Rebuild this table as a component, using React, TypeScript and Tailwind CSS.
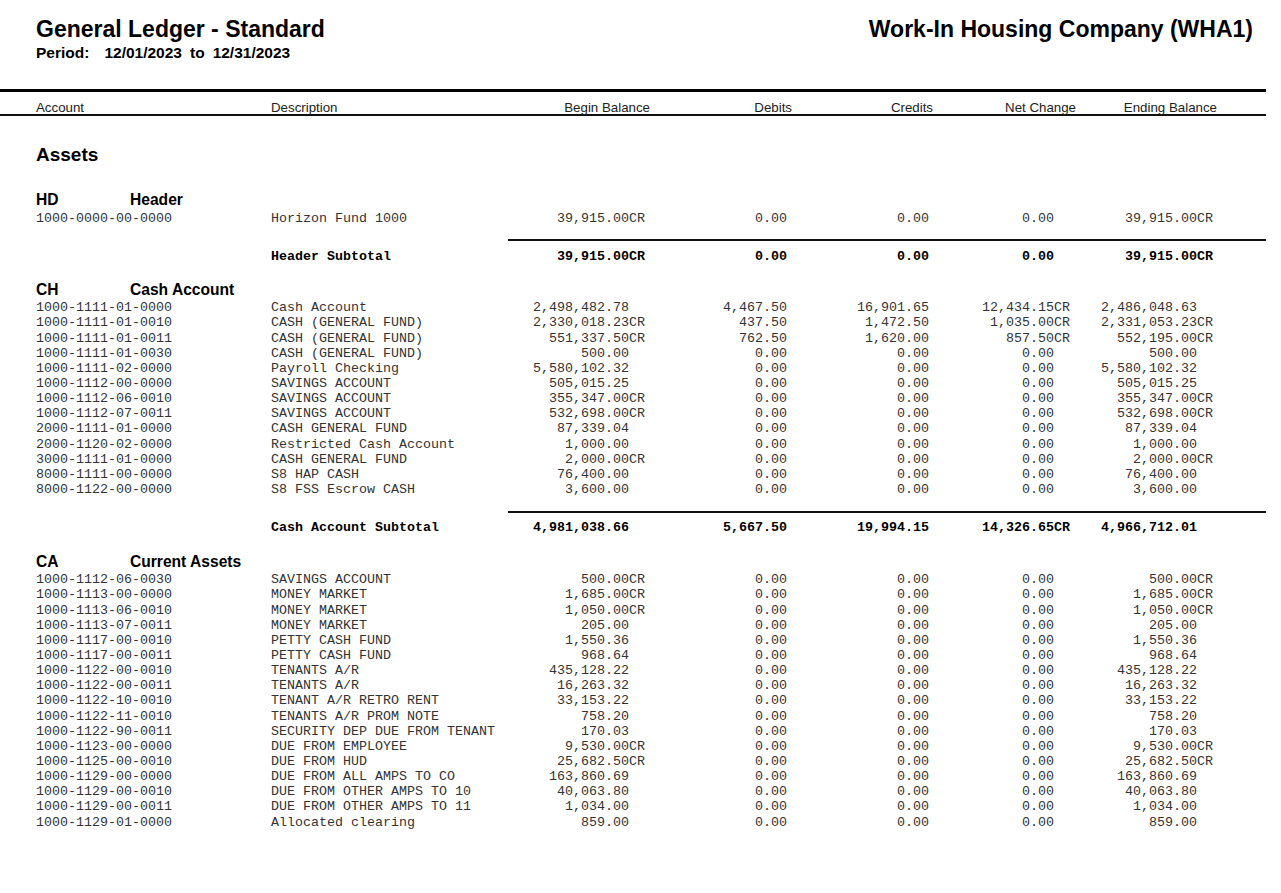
import React from "react";

type Row = [string, string, string, string, string, string, string];

const pad = (s: string) => (s.endsWith("CR") ? s : s + "  ");

const GRID = "grid grid-cols-[235px_234px_140px_142px_142px_141px_143px] pl-[36px]";

function DataRow({ r, bold }: { r: Row; bold?: boolean }) {
  return (
    <div
      className={`${GRID} h-[15.15px] leading-[18.5px] whitespace-pre text-[13.33px] font-['Liberation_Mono','Courier_New',monospace] ${
        bold ? "font-bold text-black" : "text-[#333333]"
      }`}
    >
      <div>{r[0]}</div>
      <div>{r[1]}</div>
      <div className="text-right">{pad(r[2])}</div>
      <div className="text-right">{r[3]}</div>
      <div className="text-right">{r[4]}</div>
      <div className="text-right">{pad(r[5])}</div>
      <div className="text-right">{pad(r[6])}</div>
    </div>
  );
}

function Group({
  code,
  name,
  rows,
  subtotal,
  headMt,
  rowsMt,
  lineMt,
  subMt,
}: {
  code: string;
  name: string;
  rows: Row[];
  subtotal?: Row;
  headMt: string;
  rowsMt: string;
  lineMt: string;
  subMt: string;
}) {
  return (
    <div>
      <div className={`${headMt} flex pl-[36px] h-[20px] leading-[22px] text-[15.6px] font-bold`}>
        <div className="w-[94px]">{code}</div>
        <div>{name}</div>
      </div>
      <div className={rowsMt}>
        {rows.map((r, i) => (
          <DataRow key={i} r={r} />
        ))}
      </div>
      {subtotal && (
        <>
          <div className={`${lineMt} ml-[508px] w-[758px] h-[2px] bg-[#111]`} />
          <div className={subMt}>
            <DataRow r={subtotal} bold />
          </div>
        </>
      )}
    </div>
  );
}

const z = "0.00";

const hdRows: Row[] = [
  ["1000-0000-00-0000", "Horizon Fund 1000", "39,915.00CR", z, z, z, "39,915.00CR"],
];

const chRows: Row[] = [
  ["1000-1111-01-0000", "Cash Account", "2,498,482.78", "4,467.50", "16,901.65", "12,434.15CR", "2,486,048.63"],
  ["1000-1111-01-0010", "CASH (GENERAL FUND)", "2,330,018.23CR", "437.50", "1,472.50", "1,035.00CR", "2,331,053.23CR"],
  ["1000-1111-01-0011", "CASH (GENERAL FUND)", "551,337.50CR", "762.50", "1,620.00", "857.50CR", "552,195.00CR"],
  ["1000-1111-01-0030", "CASH (GENERAL FUND)", "500.00", z, z, z, "500.00"],
  ["1000-1111-02-0000", "Payroll Checking", "5,580,102.32", z, z, z, "5,580,102.32"],
  ["1000-1112-00-0000", "SAVINGS ACCOUNT", "505,015.25", z, z, z, "505,015.25"],
  ["1000-1112-06-0010", "SAVINGS ACCOUNT", "355,347.00CR", z, z, z, "355,347.00CR"],
  ["1000-1112-07-0011", "SAVINGS ACCOUNT", "532,698.00CR", z, z, z, "532,698.00CR"],
  ["2000-1111-01-0000", "CASH GENERAL FUND", "87,339.04", z, z, z, "87,339.04"],
  ["2000-1120-02-0000", "Restricted Cash Account", "1,000.00", z, z, z, "1,000.00"],
  ["3000-1111-01-0000", "CASH GENERAL FUND", "2,000.00CR", z, z, z, "2,000.00CR"],
  ["8000-1111-00-0000", "S8 HAP CASH", "76,400.00", z, z, z, "76,400.00"],
  ["8000-1122-00-0000", "S8 FSS Escrow CASH", "3,600.00", z, z, z, "3,600.00"],
];

const caRows: Row[] = [
  ["1000-1112-06-0030", "SAVINGS ACCOUNT", "500.00CR", z, z, z, "500.00CR"],
  ["1000-1113-00-0000", "MONEY MARKET", "1,685.00CR", z, z, z, "1,685.00CR"],
  ["1000-1113-06-0010", "MONEY MARKET", "1,050.00CR", z, z, z, "1,050.00CR"],
  ["1000-1113-07-0011", "MONEY MARKET", "205.00", z, z, z, "205.00"],
  ["1000-1117-00-0010", "PETTY CASH FUND", "1,550.36", z, z, z, "1,550.36"],
  ["1000-1117-00-0011", "PETTY CASH FUND", "968.64", z, z, z, "968.64"],
  ["1000-1122-00-0010", "TENANTS A/R", "435,128.22", z, z, z, "435,128.22"],
  ["1000-1122-00-0011", "TENANTS A/R", "16,263.32", z, z, z, "16,263.32"],
  ["1000-1122-10-0010", "TENANT A/R RETRO RENT", "33,153.22", z, z, z, "33,153.22"],
  ["1000-1122-11-0010", "TENANTS A/R PROM NOTE", "758.20", z, z, z, "758.20"],
  ["1000-1122-90-0011", "SECURITY DEP DUE FROM TENANT", "170.03", z, z, z, "170.03"],
  ["1000-1123-00-0000", "DUE FROM EMPLOYEE", "9,530.00CR", z, z, z, "9,530.00CR"],
  ["1000-1125-00-0010", "DUE FROM HUD", "25,682.50CR", z, z, z, "25,682.50CR"],
  ["1000-1129-00-0000", "DUE FROM ALL AMPS TO CO", "163,860.69", z, z, z, "163,860.69"],
  ["1000-1129-00-0010", "DUE FROM OTHER AMPS TO 10", "40,063.80", z, z, z, "40,063.80"],
  ["1000-1129-00-0011", "DUE FROM OTHER AMPS TO 11", "1,034.00", z, z, z, "1,034.00"],
  ["1000-1129-01-0000", "Allocated clearing", "859.00", z, z, z, "859.00"],
];

export default function App() {
  return (
    <div className="w-[1281px] h-[893px] bg-white text-black overflow-hidden font-['Liberation_Sans',Arial,sans-serif]">
      <div className="flex justify-between pl-[36px] pr-[28px] pt-[17px]">
        <div>
          <div className="text-[23px] font-bold leading-[24px]">General Ledger - Standard</div>
          <div className="flex mt-[4px] text-[15.5px] font-bold leading-[16px] whitespace-pre">
            <span>Period:</span>
            <span className="ml-[15px]">12/01/2023</span>
            <span className="ml-[8px]">to</span>
            <span className="ml-[8px]">12/31/2023</span>
          </div>
        </div>
        <div className="text-[23px] font-bold leading-[24px]">Work-In Housing Company (WHA1)</div>
      </div>

      <div className="w-[1266px]">
        <div className="mt-[28px] h-[3px] bg-black" />
        <div className="grid grid-cols-[235px_234px_145px_142px_141px_143px_141px] pl-[36px] h-[22px] pt-[9px] leading-[13px] text-[13.3px] text-[#222] whitespace-pre">
          <div>Account</div>
          <div>Description</div>
          <div className="text-right">Begin Balance</div>
          <div className="text-right">Debits</div>
          <div className="text-right">Credits</div>
          <div className="text-right">Net Change</div>
          <div className="text-right">Ending Balance</div>
        </div>
        <div className="h-[2px] bg-[#111]" />

        <div className="mt-[26px] pl-[36px] h-[24px] leading-[26px] text-[19px] font-bold">Assets</div>

        <Group
          code="HD"
          name="Header"
          rows={hdRows}
          subtotal={["", "Header Subtotal", "39,915.00CR", z, z, z, "39,915.00CR"]}
          headMt="mt-[23px]"
          rowsMt="mt-[1px]"
          lineMt="mt-[14px]"
          subMt="mt-[7px]"
        />
        <Group
          code="CH"
          name="Cash Account"
          rows={chRows}
          subtotal={["", "Cash Account Subtotal", "4,981,038.66", "5,667.50", "19,994.15", "14,326.65CR", "4,966,712.01"]}
          headMt="mt-[16px]"
          rowsMt="mt-0"
          lineMt="mt-[15px]"
          subMt="mt-[6px]"
        />
        <Group
          code="CA"
          name="Current Assets"
          rows={caRows}
          headMt="mt-[17px]"
          rowsMt="mt-0"
          lineMt="mt-0"
          subMt="mt-0"
        />
      </div>
    </div>
  );
}
